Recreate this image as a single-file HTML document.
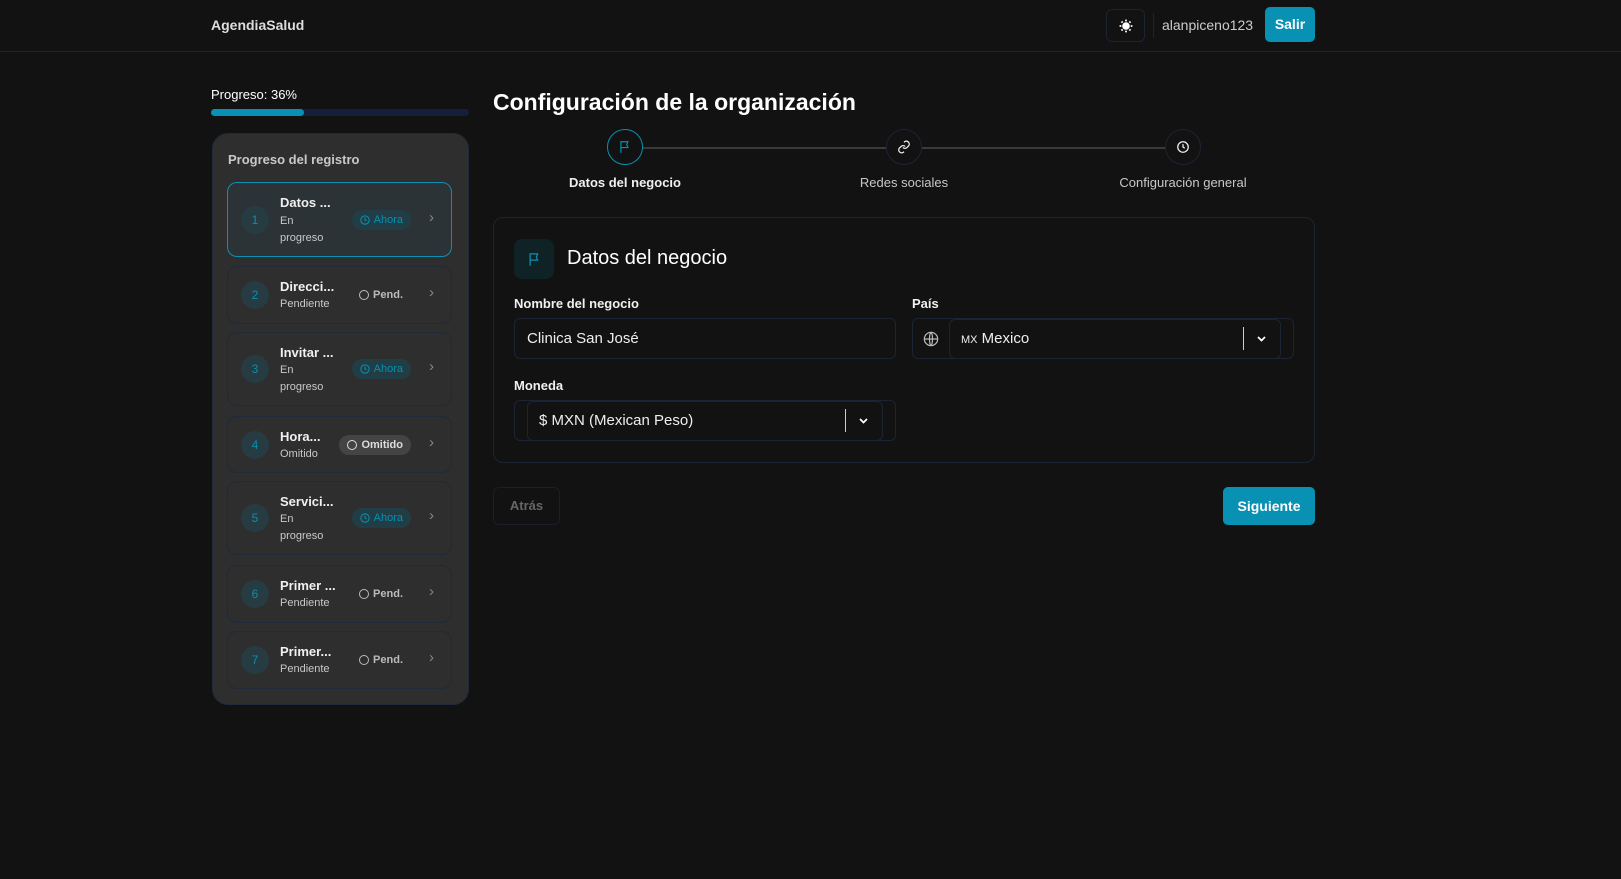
<!DOCTYPE html>
<html><head><meta charset="utf-8"><style>
*{box-sizing:border-box;margin:0;padding:0}
body{width:1621px;height:879px;background:#121212;font-family:"Liberation Sans",sans-serif;color:#e5e5e5;position:relative;overflow:hidden}
.a{position:absolute}
.hdr{left:0;top:0;width:1621px;height:52px;border-bottom:1px solid #1c2433}
.item{position:absolute;left:227px;width:225px;border:1px solid #1f2a3a;border-radius:10px;background:#2e2e2e}
.item .n{position:absolute;left:13px;width:28px;height:28px;border-radius:50%;background:#263b42;color:#0a8fb0;font-size:12px;text-align:center;line-height:28px}
.item .t{position:absolute;left:52px;font-size:13px;font-weight:bold;color:#f0f0f0}
.item .s{position:absolute;left:52px;font-size:11px;color:#c8c8c8;line-height:17px;width:50px}
.item .b{position:absolute;right:40px;height:20px;border-radius:10px;font-size:11px;line-height:20px;padding:0 8px;display:flex;align-items:center;gap:4px}
.ah{background:#213d45;color:#0a8fb0}
.pe{color:#bbb;font-weight:bold}
.om{background:#444;color:#ddd;font-weight:bold}
.item .c{position:absolute;right:17px;color:#888;font-size:15px}
.dot{width:10px;height:10px;border-radius:50%;border:1.3px solid currentColor;display:inline-block}
.lbl{font-size:13px;font-weight:bold;color:#f0f0f0}
.inp{border:1px solid #1c2433;border-radius:6px;background:#121212}
</style></head><body>
<div class="a hdr"></div>
<div class="a" style="left:211px;top:17px;font-size:14px;font-weight:bold;color:#ddd">AgendiaSalud</div>
<div class="a" style="left:1106px;top:9px;width:39px;height:33px;border:1px solid #1c2433;border-radius:6px;display:flex;align-items:center;justify-content:center">
<svg width="14" height="14" viewBox="0 0 24 24" fill="none" stroke="#fff" stroke-width="3"><circle cx="12" cy="12" r="5" fill="#fff"/><path d="M12 1v3M12 20v3M1 12h3M20 12h3M4.2 4.2l2.1 2.1M17.7 17.7l2.1 2.1M4.2 19.8l2.1-2.1M17.7 6.3l2.1-2.1"/></svg></div>
<div class="a" style="left:1153px;top:13px;width:1px;height:25px;background:#1c2433"></div>
<div class="a" style="left:1162px;top:17px;font-size:14px;color:#ccc">alanpiceno123</div>
<div class="a" style="left:1265px;top:7px;width:50px;height:35px;border-radius:5px;background:#0891b2;color:#fff;font-weight:bold;font-size:14px;text-align:center;line-height:35px">Salir</div>

<div class="a" style="left:211px;top:87px;font-size:13px;color:#fff">Progreso: 36%</div>
<div class="a" style="left:211px;top:109px;width:258px;height:7px;border-radius:4px;background:#14203a"><div style="width:93px;height:7px;border-radius:4px;background:#0891b2"></div></div>
<div class="a" style="left:212px;top:133px;width:257px;height:572px;border:1px solid #1f2a3a;border-radius:16px;background:#2e2e2e"></div>
<div class="a" style="left:228px;top:152px;font-size:13px;font-weight:bold;color:#c9c9c9">Progreso del registro</div>

<div class="item" style="top:182px;height:75px;border:1.5px solid #0891b2;background:#2b3336">
<div class="n" style="top:23px">1</div><div class="t" style="top:12px">Datos ...</div><div class="s" style="top:30px">En<br>progreso</div>
<div class="b ah" style="top:27px"><svg width="10" height="10" viewBox="0 0 24 24" fill="none" stroke="currentColor" stroke-width="2.5"><circle cx="12" cy="12" r="10"/><path d="M12 6v6l4 2"/></svg>Ahora</div><div class="c" style="top:26px">&#8250;</div></div>

<div class="item" style="top:266px;height:58px">
<div class="n" style="top:14px">2</div><div class="t" style="top:12px">Direcci...</div><div class="s" style="top:29px">Pendiente</div>
<div class="b pe" style="top:18px"><span class="dot"></span>Pend.</div><div class="c" style="top:17px">&#8250;</div></div>

<div class="item" style="top:332px;height:74px">
<div class="n" style="top:22px">3</div><div class="t" style="top:12px">Invitar ...</div><div class="s" style="top:29px">En<br>progreso</div>
<div class="b ah" style="top:26px"><svg width="10" height="10" viewBox="0 0 24 24" fill="none" stroke="currentColor" stroke-width="2.5"><circle cx="12" cy="12" r="10"/><path d="M12 6v6l4 2"/></svg>Ahora</div><div class="c" style="top:25px">&#8250;</div></div>

<div class="item" style="top:416px;height:57px">
<div class="n" style="top:14px">4</div><div class="t" style="top:12px">Hora...</div><div class="s" style="top:29px">Omitido</div>
<div class="b om" style="top:18px"><span class="dot"></span>Omitido</div><div class="c" style="top:17px">&#8250;</div></div>

<div class="item" style="top:481px;height:74px">
<div class="n" style="top:22px">5</div><div class="t" style="top:12px">Servici...</div><div class="s" style="top:29px">En<br>progreso</div>
<div class="b ah" style="top:26px"><svg width="10" height="10" viewBox="0 0 24 24" fill="none" stroke="currentColor" stroke-width="2.5"><circle cx="12" cy="12" r="10"/><path d="M12 6v6l4 2"/></svg>Ahora</div><div class="c" style="top:25px">&#8250;</div></div>

<div class="item" style="top:565px;height:58px">
<div class="n" style="top:14px">6</div><div class="t" style="top:12px">Primer ...</div><div class="s" style="top:29px">Pendiente</div>
<div class="b pe" style="top:18px"><span class="dot"></span>Pend.</div><div class="c" style="top:17px">&#8250;</div></div>

<div class="item" style="top:631px;height:58px">
<div class="n" style="top:14px">7</div><div class="t" style="top:12px">Primer...</div><div class="s" style="top:29px">Pendiente</div>
<div class="b pe" style="top:18px"><span class="dot"></span>Pend.</div><div class="c" style="top:17px">&#8250;</div></div>

<div class="a" style="left:493px;top:89px;font-size:23px;font-weight:bold;color:#fff">Configuración de la organización</div>
<div class="a" style="left:642px;top:147px;width:244px;height:2px;background:#3a3a3a"></div>
<div class="a" style="left:922px;top:147px;width:244px;height:2px;background:#3a3a3a"></div>
<div class="a" style="left:607px;top:129px;width:36px;height:36px;border-radius:50%;border:1.5px solid #0891b2;display:flex;align-items:center;justify-content:center">
<svg width="14" height="14" viewBox="0 0 24 24" fill="none" stroke="#0891b2" stroke-width="2"><path d="M5 22V3h12l-2 5 2 5H5"/></svg></div>
<div class="a" style="left:886px;top:129px;width:36px;height:36px;border-radius:50%;border:1px solid #1c2433;background:#121212;display:flex;align-items:center;justify-content:center">
<svg width="14" height="14" viewBox="0 0 24 24" fill="none" stroke="#eee" stroke-width="2.2"><path d="M10 13a5 5 0 0 0 7 0l3-3a5 5 0 0 0-7-7l-1 1M14 11a5 5 0 0 0-7 0l-3 3a5 5 0 0 0 7 7l1-1"/></svg></div>
<div class="a" style="left:1165px;top:129px;width:36px;height:36px;border-radius:50%;border:1px solid #1c2433;background:#121212;display:flex;align-items:center;justify-content:center">
<svg width="14" height="14" viewBox="0 0 24 24" fill="none" stroke="#eee" stroke-width="2.2"><circle cx="12" cy="12" r="9"/><path d="M12 7v5l3 2"/></svg></div>
<div class="a" style="left:525px;top:175px;width:200px;text-align:center;font-size:13px;font-weight:bold;color:#f0f0f0">Datos del negocio</div>
<div class="a" style="left:804px;top:175px;width:200px;text-align:center;font-size:13px;color:#c8c8c8">Redes sociales</div>
<div class="a" style="left:1083px;top:175px;width:200px;text-align:center;font-size:13px;color:#c8c8c8">Configuración general</div>

<div class="a" style="left:493px;top:217px;width:822px;height:246px;border:1px solid #1c2433;border-radius:10px"></div>
<div class="a" style="left:514px;top:239px;width:40px;height:40px;border-radius:8px;background:#0f2226;display:flex;align-items:center;justify-content:center">
<svg width="15" height="15" viewBox="0 0 24 24" fill="none" stroke="#0891b2" stroke-width="2"><path d="M5 22V3h12l-2 5 2 5H5"/></svg></div>
<div class="a" style="left:567px;top:247px;font-size:20px;color:#fff">Datos del negocio</div>
<div class="a lbl" style="left:514px;top:296px">Nombre del negocio</div>
<div class="a inp" style="left:514px;top:318px;width:382px;height:41px;padding:11px 12px;font-size:15px;color:#eee">Clinica San José</div>
<div class="a lbl" style="left:912px;top:296px">País</div>
<div class="a inp" style="left:912px;top:318px;width:382px;height:41px"></div>
<svg class="a" style="left:923px;top:331px" width="16" height="16" viewBox="0 0 24 24" fill="none" stroke="#bbb" stroke-width="1.8"><circle cx="12" cy="12" r="10"/><path d="M2 12h20M12 2c3 3 3 17 0 20M12 2c-3 3-3 17 0 20"/></svg>
<div class="a inp" style="left:949px;top:319px;width:332px;height:40px;padding:10px 11px;font-size:15px;color:#eee"><span style="font-size:11px">MX</span> Mexico</div>
<div class="a" style="left:1243px;top:327px;width:1px;height:23px;background:#ccc"></div>
<svg class="a" style="left:1255px;top:333px" width="13" height="12" viewBox="0 0 24 24" fill="none" stroke="#fff" stroke-width="3.5"><path d="M5 8l7 7 7-7"/></svg>
<div class="a lbl" style="left:514px;top:378px">Moneda</div>
<div class="a inp" style="left:514px;top:400px;width:382px;height:41px"></div>
<div class="a inp" style="left:527px;top:401px;width:356px;height:40px;padding:10px 11px;font-size:15px;color:#eee">$ MXN (Mexican Peso)</div>
<div class="a" style="left:845px;top:409px;width:1px;height:23px;background:#ccc"></div>
<svg class="a" style="left:857px;top:415px" width="13" height="12" viewBox="0 0 24 24" fill="none" stroke="#fff" stroke-width="3.5"><path d="M5 8l7 7 7-7"/></svg>

<div class="a" style="left:493px;top:487px;width:67px;height:38px;border:1px solid #1a1f28;border-radius:6px;font-size:13px;font-weight:bold;color:#666;text-align:center;line-height:36px">Atrás</div>
<div class="a" style="left:1223px;top:487px;width:92px;height:38px;border-radius:5px;background:#0891b2;font-size:14px;font-weight:bold;color:#fff;text-align:center;line-height:38px">Siguiente</div>
</body></html>
